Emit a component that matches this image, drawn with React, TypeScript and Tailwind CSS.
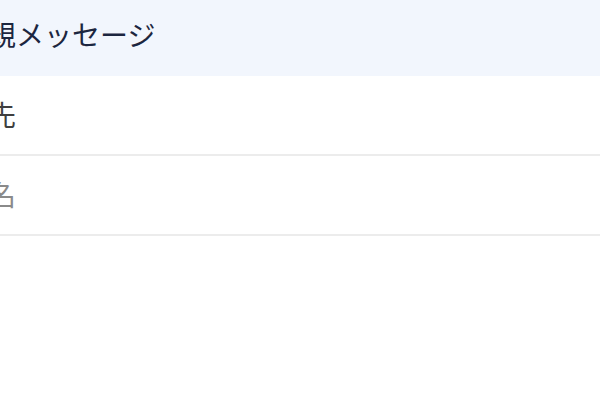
import React from "react";

const jp = { fontFamily: '"Noto Sans CJK JP", "Noto Sans", sans-serif' };

export default function App() {
  return (
    <div className="w-[600px] h-[400px] overflow-hidden bg-white" style={jp}>
      <div className="-ml-[64px] w-[664px]">
        {/* Compose header */}
        <header className="h-[76px] bg-[#f2f6fd] flex items-center px-6 pb-[9px]">
          <h1 className="text-[28px] leading-none font-normal text-[#1c2640]">新規メッセージ</h1>
        </header>

        {/* Recipient */}
        <div className="h-[80px] flex items-center px-6 border-b-2 border-[#ececec] pb-[3px]">
          <span className="text-[28px] leading-none text-[#3f3f3f]">宛先</span>
        </div>

        {/* Subject */}
        <div className="h-[80px] flex items-center px-6 border-b-2 border-[#ececec] pb-[3px]">
          <span className="text-[28px] leading-none text-[#8a8a8a]">件名</span>
        </div>
      </div>
    </div>
  );
}
